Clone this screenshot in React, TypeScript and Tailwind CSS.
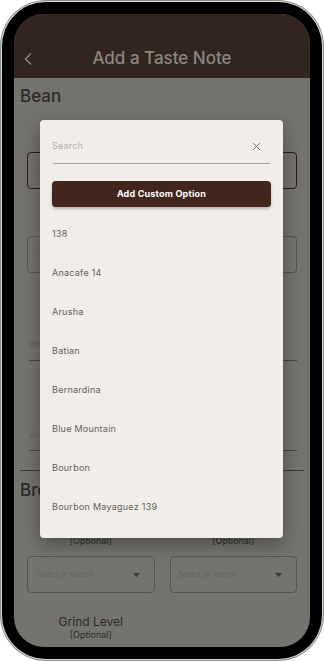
import { X, ChevronLeft } from "lucide-react";

const beans = [
  "138",
  "Anacafe 14",
  "Arusha",
  "Batian",
  "Bernardina",
  "Blue Mountain",
  "Bourbon",
  "Bourbon Mayaguez 139",
];

function Caret() {
  return (
    <svg width="7" height="4" viewBox="0 0 7 4" className="shrink-0">
      <path d="M0 0h7L3.5 4z" fill="#3a3936" />
    </svg>
  );
}

function SelectBox({ className = "" }: { className?: string }) {
  return (
    <div
      className={[
        "flex h-[37px] items-center justify-between rounded-[4px] border border-[#575551] pl-[8px] pr-[14px]",
        className,
      ].join(" ")}
    >
      <span className="text-[7.5px] text-[#65635e]">Select or search</span>
      <Caret />
    </div>
  );
}

export default function App() {
  return (
    <div
      className="h-[661px] w-[324px] bg-white"
      style={{ fontFamily: "Inter, 'Noto Sans', sans-serif" }}
    >
      <div className="h-full w-full rounded-[46px] bg-[#8f8f8f] p-px">
        <div className="h-full w-full rounded-[45px] bg-[#d6d6d6] p-px">
          <div className="h-full w-full rounded-[44px] bg-black p-[12px]">
            {/* screen */}
            <div className="relative flex h-full w-full flex-col overflow-hidden rounded-[30px] bg-[#74736e]">
              {/* app bar */}
              <div className="flex h-[64px] shrink-0 items-center bg-[#33241f] pt-[26px]">
                <ChevronLeft
                  size={20}
                  strokeWidth={2}
                  className="ml-[4px] text-[#8a8580]"
                />
                <div className="flex-1 pr-[24px] text-center text-[17px] font-medium text-[#8a8580]">
                  Add a Taste Note
                </div>
              </div>

              {/* page body, dimmed */}
              <div className="flex flex-col px-[6px]">
                <div className="mt-[8px] text-[17px] font-medium leading-[20px] text-[#2b2a28]">
                  Bean
                </div>
                <div className="mx-[7px] mt-[46px] flex h-[37px] items-center rounded-[4px] border-[1.5px] border-[#2a1c17] pl-[8px]">
                  <span className="text-[7.5px] text-[#65635e]">Select or search</span>
                </div>
                <div className="mx-[7px] mt-[47px] flex h-[37px] items-center rounded-[4px] border border-[#575551] pl-[8px]">
                  <span className="text-[7.5px] text-[#65635e]">Select or search</span>
                </div>
                <div className="mx-[7px] mt-[66px] flex flex-col">
                  <span className="pl-[2px] text-[9px] leading-[12px] text-[#63615c]">
                    Write your tasting notes
                  </span>
                  <div className="mt-[9px] ml-[2px] h-px bg-[#4a4845]" />
                </div>
                <div className="mx-[7px] mt-[68px] flex flex-col">
                  <span className="pl-[2px] text-[9px] leading-[12px] text-[#63615c]">
                    Write your tasting notes
                  </span>
                  <div className="mt-[9px] ml-[2px] h-px bg-[#4a4845]" />
                </div>
                <div className="mt-[19px] h-px bg-[#3f3e3b]" />
                <div className="mt-[9px] text-[17px] font-medium leading-[20px] text-[#2b2a28]">
                  Brew
                </div>
                <div className="mx-[7px] mt-[21px] grid grid-cols-2 gap-[15px]">
                  <div className="flex flex-col items-center">
                    <span className="text-[12px] leading-[14px] text-[#2b2a28]">Brew Method</span>
                    <span className="text-[9px] leading-[12px] text-[#2e2d2b]">[Optional]</span>
                    <SelectBox className="mt-[9px] w-full" />
                  </div>
                  <div className="flex flex-col items-center">
                    <span className="text-[12px] leading-[14px] text-[#2b2a28]">Brewer</span>
                    <span className="text-[9px] leading-[12px] text-[#2e2d2b]">[Optional]</span>
                    <SelectBox className="mt-[9px] w-full" />
                  </div>
                </div>
                <div className="mx-[7px] mt-[22px] grid grid-cols-2 gap-[15px]">
                  <div className="flex flex-col items-center">
                    <span className="text-[12px] leading-[14px] text-[#2b2a28]">Grind Level</span>
                    <span className="text-[9px] leading-[12px] text-[#2e2d2b]">[Optional]</span>
                  </div>
                </div>
              </div>

              {/* dialog */}
              <div className="absolute left-[26px] top-[106px] flex h-[418px] w-[243px] flex-col rounded-[4px] bg-[#f1eee9] px-[12px] shadow-[0_6px_18px_rgba(0,0,0,0.35)]">
                <div className="mt-[18px] flex items-center justify-between">
                  <span className="text-[9px] leading-[14px] tracking-[0.2px] text-[#b3afa9]">
                    Search
                  </span>
                  <X size={13} strokeWidth={1.5} className="mr-[8px] mt-[2px] text-[#6a6762]" />
                </div>
                <div className="ml-px mr-[1px] mt-[10px] h-px bg-[#a9a6a1]" />
                <button
                  type="button"
                  className="mt-[17px] flex h-[26px] w-full items-center justify-center rounded-[4px] bg-[#43261c] text-[9px] font-bold tracking-[0.2px] text-white shadow-[0_2px_3px_rgba(0,0,0,0.25)]"
                >
                  Add Custom Option
                </button>
                <div className="mt-[7px] flex flex-col">
                  {beans.map((b) => (
                    <div
                      key={b}
                      className="flex h-[39px] items-center text-[9px] tracking-[0.25px] text-[#64615c]"
                    >
                      {b}
                    </div>
                  ))}
                </div>
              </div>
            </div>
          </div>
        </div>
      </div>
    </div>
  );
}
